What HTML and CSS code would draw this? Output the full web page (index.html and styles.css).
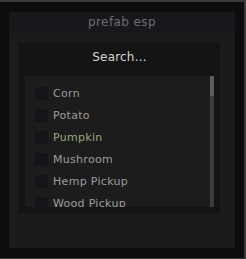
FILE: index.html
```html
<!DOCTYPE html>
<html>
<head>
  <title>prefab esp</title>
  <link rel="stylesheet" href="styles.css">
</head>
<body>
  <div class="frame">
    <div class="panel">
      <div class="panel-header">prefab esp</div>
      <div class="panel-body">
        <div class="search-box">
          <div class="search-label">Search...</div>
          <div class="list">
            <div class="items">
              <div class="item"><span class="check"></span><span class="name">Corn</span></div>
              <div class="item"><span class="check"></span><span class="name">Potato</span></div>
              <div class="item active"><span class="check"></span><span class="name">Pumpkin</span></div>
              <div class="item"><span class="check"></span><span class="name">Mushroom</span></div>
              <div class="item"><span class="check"></span><span class="name">Hemp Pickup</span></div>
              <div class="item"><span class="check"></span><span class="name">Wood Pickup</span></div>
            </div>
            <div class="scrollbar"><div class="thumb"></div></div>
          </div>
        </div>
      </div>
    </div>
  </div>
</body>
</html>
```

FILE: styles.css
```css
body {
  margin: 0;
  background-color: #3a3a3a;
  font-family: "DejaVu Sans", sans-serif;
  width: 246px;
  height: 259px;
  overflow: hidden;
}

.frame {
  margin-top: 2px;
  width: 244px;
  height: 256px;
  box-sizing: border-box;
  padding: 10px 9px 10px 9px;
  background-color: #0d0d0d;
}

.panel {
  height: 236px;
  display: flex;
  flex-direction: column;
  background-color: #1b1b1b;
}

.panel-header {
  height: 21px;
  line-height: 21px;
  text-align: center;
  background-color: #16181b;
  color: #6e6e6e;
  font-size: 12px;
  letter-spacing: 0.4px;
}

.panel-body {
  flex: 1;
  padding: 9px 15px 0 10px;
}

.search-box {
  height: 172px;
  box-sizing: border-box;
  padding: 0 6px 7px 6px;
  background-color: #141414;
  display: flex;
  flex-direction: column;
}

.search-label {
  height: 34px;
  line-height: 30px;
  text-align: center;
  color: #d6d6d6;
  font-size: 12px;
  letter-spacing: 0.2px;
}

.list {
  flex: 1;
  display: flex;
  background-color: #1c1c1c;
  overflow: hidden;
}

.items {
  flex: 1;
  padding: 11px 0 0 10px;
  overflow: hidden;
}

.item {
  display: flex;
  align-items: center;
  height: 13px;
  margin-bottom: 9px;
  font-size: 11px;
  color: #9c9c9c;
  letter-spacing: 0.3px;
}

.item.active {
  color: #9aa77e;
}

.check {
  width: 13px;
  height: 13px;
  margin-right: 5px;
  background-color: #131519;
  flex-shrink: 0;
}

.scrollbar {
  width: 4px;
  background-color: #3c3c3c;
}

.thumb {
  height: 20px;
  background-color: #5c5c5c;
}
```
